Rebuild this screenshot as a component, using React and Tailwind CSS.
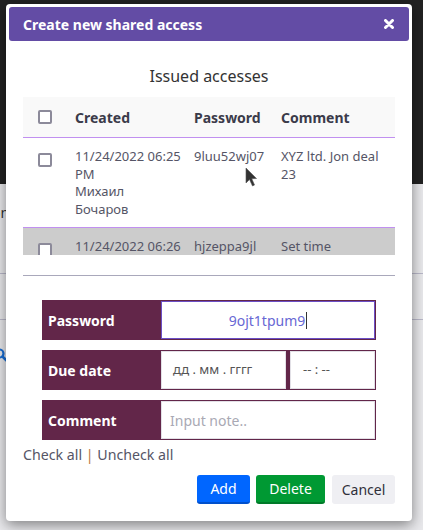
import React from "react";

const rows = [
  {
    id: 1,
    created: ["11/24/2022 06:25", "PM", "Михаил", "Бочаров"],
    password: "9luu52wj07",
    comment: "XYZ ltd. Jon deal 23",
    selected: false,
  },
  {
    id: 2,
    created: ["11/24/2022 06:26", "PM"],
    password: "hjzeppa9jl",
    comment: "Set time",
    selected: true,
  },
];

const Checkbox = () => (
  <span className="block h-[14px] w-[14px] rounded-[2px] border-2 border-[#8c8a9a] bg-white" />
);

const FieldRow = ({ label, children }) => (
  <div className="flex h-[40px] bg-[#622649] p-[1px]">
    <div className="flex w-[118px] shrink-0 items-center pl-[5px] text-[14px] font-bold text-white">
      {label}
    </div>
    {children}
  </div>
);

export default function App() {
  return (
    <div className="relative h-[530px] w-[423px] overflow-hidden bg-[#e9e9ec] font-['Noto_Sans',sans-serif]">
      {/* page behind the dialog */}
      <div className="h-[184px] bg-[#222222]" />
      <div className="relative h-[346px]">
        <div className="ml-[-8px] pt-[18px] text-[14px] text-[#333]">one</div>
        <div className="mt-[50px] h-px bg-[#b9b8c9]" />
        <div className="mt-[45px] h-px bg-[#b9b8c9]" />
        <svg className="ml-[-6px] mt-[28px]" width="14" height="14" viewBox="0 0 14 14">
          <circle cx="5.5" cy="5.5" r="4" fill="none" stroke="#1a6fd6" strokeWidth="2.2" />
          <path d="M8.5 8.5 L12.5 12.5" stroke="#1a6fd6" strokeWidth="2.5" strokeLinecap="round" />
        </svg>
      </div>

      {/* dialog */}
      <div className="absolute left-[6px] top-[4px] flex h-[517px] w-[406px] flex-col rounded-[4px] bg-white shadow-[0_4px_14px_rgba(0,0,0,0.45)]">
        <div className="mx-[3px] mt-[3px] flex h-[34px] items-center justify-between rounded-[3px] bg-[#634ca5] pl-[14px] pr-[15px]">
          <span className="text-[14px] font-bold text-white">Create new shared access</span>
          <svg width="10" height="10" viewBox="0 0 10 10">
            <path d="M1.5 1.5 L8.5 8.5 M8.5 1.5 L1.5 8.5" stroke="white" strokeWidth="3" strokeLinecap="round" />
          </svg>
        </div>

        <div className="mt-[24px] text-center text-[16px] leading-[22px] text-[#333]">Issued accesses</div>

        <div className="relative mx-[17px] mt-[10px] h-[158px] overflow-hidden">
          <div className="flex h-[41px] items-center border-b border-[#c190f0] bg-[#f9f9f9] text-[14px] font-bold text-[#3b3b4a]">
            <div className="w-[52px] pl-[15px]">
              <Checkbox />
            </div>
            <div className="w-[119px]">Created</div>
            <div className="w-[87px]">Password</div>
            <div className="flex-1">Comment</div>
          </div>
          {rows.map((row) => (
            <div
              key={row.id}
              className={`flex border-b border-[#c190f0] pb-[9px] pt-[10px] text-[13px] leading-[17.5px] text-[#555566] ${
                row.selected ? "bg-[#cccccc]" : "bg-white"
              }`}
            >
              <div className="w-[52px] pl-[15px] pt-[5px]">
                <Checkbox />
              </div>
              <div className="w-[119px]">
                {row.created.map((line) => (
                  <div key={line}>{line}</div>
                ))}
              </div>
              <div className="w-[87px]">{row.password}</div>
              <div className="flex-1 pr-[10px]">{row.comment}</div>
            </div>
          ))}
          <svg className="absolute left-[222px] top-[70px]" width="13" height="20" viewBox="0 0 13 20">
            <path d="M1 1 L1 16 L4.5 12.5 L7.5 19 L9.5 18 L6.8 11.7 L11.5 11.5 Z" fill="#333" stroke="#555" strokeWidth="0.6" />
          </svg>
        </div>

        <div className="mx-[17px] mt-[20px] h-px bg-[#a9a8bb]" />

        <div className="mx-[36px] mt-[24px] flex flex-col gap-[10px]">
          <FieldRow label="Password">
            <div className="flex flex-1 items-center justify-center border border-[#6b4fc6] bg-white text-[14px] text-[#6767d4]">
              9ojt1tpum9<span className="ml-[1px] h-[17px] w-px bg-[#333]" />
            </div>
          </FieldRow>
          <FieldRow label="Due date">
            <div className="flex w-[125px] items-center border border-[#e2e0e6] bg-white pl-[11px] text-[13px] text-[#555]">
              дд . мм . гггг
            </div>
            <div className="ml-[4px] flex flex-1 items-center border border-[#e2e0e6] bg-white pl-[12px] text-[13px] text-[#555]">
              -- : --
            </div>
          </FieldRow>
          <FieldRow label="Comment">
            <div className="flex flex-1 items-center border border-[#e2e0e6] bg-white pl-[8px] text-[14px] text-[#a9a9b4]">
              Input note..
            </div>
          </FieldRow>
        </div>

        <div className="mx-[17px] mt-[5px] text-[14.2px] leading-[20px] text-[#555566]">
          Check all <span className="text-[#b9773d]">|</span> Uncheck all
        </div>

        <div className="mr-[17px] mt-[10px] flex justify-end gap-[6px]">
          <button className="h-[29px] w-[53px] rounded-[3px] border-b-2 border-[#0050cc] bg-[#0066ff] text-[14px] text-white">
            Add
          </button>
          <button className="h-[29px] w-[69px] rounded-[3px] border-b-2 border-[#007a29] bg-[#009933] text-[14px] text-white">
            Delete
          </button>
          <button className="ml-[1px] h-[29px] w-[63px] rounded-[3px] bg-[#efeff3] text-[14px] text-[#2f2f3a]">
            Cancel
          </button>
        </div>
      </div>
    </div>
  );
}
